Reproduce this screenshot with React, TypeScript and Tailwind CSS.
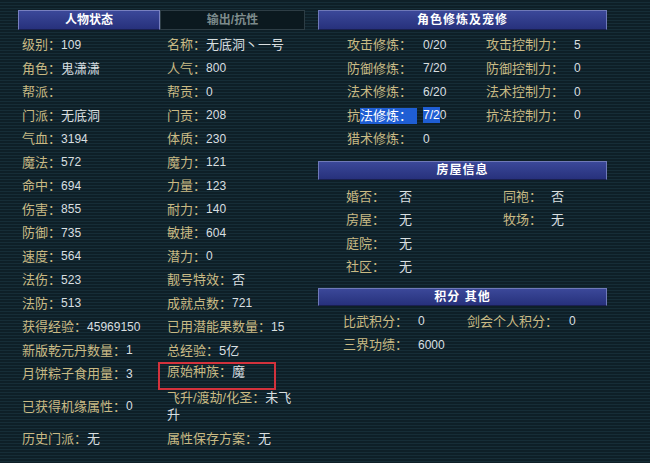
import React from 'react';

const label = 'text-[#c9ba84]';
const value = 'text-[#d9dfe0]';

const isAscii = (s: string) => /^[\x00-\x7f]+$/.test(s);

function Val({ v }: { v: string }) {
  return (
    <span className={`${value} ${isAscii(v) ? 'text-[12px]' : 'text-[13px]'}`}>{v}</span>
  );
}

function Pair({ k, v }: { k: string; v: string }) {
  return (
    <div className="flex items-center whitespace-nowrap">
      <span className={`${label} text-[13px]`}>{k}：</span>
      <Val v={v} />
    </div>
  );
}

const leftRows: [string, string, string, string][] = [
  ['级别', '109', '名称', '无底洞丶一号'],
  ['角色', '鬼潇潇', '人气', '800'],
  ['帮派', '', '帮贡', '0'],
  ['门派', '无底洞', '门贡', '208'],
  ['气血', '3194', '体质', '230'],
  ['魔法', '572', '魔力', '121'],
  ['命中', '694', '力量', '123'],
  ['伤害', '855', '耐力', '140'],
  ['防御', '735', '敏捷', '604'],
  ['速度', '564', '潜力', '0'],
  ['法伤', '523', '靓号特效', '否'],
  ['法防', '513', '成就点数', '721'],
  ['获得经验', '45969150', '已用潜能果数量', '15'],
  ['新版乾元丹数量', '1', '总经验', '5亿'],
];

const trainRows: [string, string, string, string][] = [
  ['攻击修炼', '0/20', '攻击控制力', '5'],
  ['防御修炼', '7/20', '防御控制力', '0'],
  ['法术修炼', '6/20', '法术控制力', '0'],
];

function Header({ title, h }: { title: string; h: string }) {
  return (
    <div
      className={`${h} flex items-center justify-center bg-gradient-to-b from-[#3b4899] to-[#27317c] border border-[#6f79b8] border-b-[#1a2050] text-white font-bold text-[12px] tracking-[1px]`}
    >
      {title}
    </div>
  );
}

export default function App() {
  return (
    <div className="w-[650px] h-[463px] overflow-hidden flex gap-[13px] pt-[10px] pl-[18px] bg-[repeating-linear-gradient(180deg,#0e1f27_0px,#0e1f27_2px,#162d37_2px,#162d37_3px)] font-[family-name:'Liberation_Sans','Noto_Sans_CJK_SC',sans-serif]">
      {/* left: character status */}
      <div className="w-[287px] flex flex-col">
        <div className="h-[20px] flex">
          <div className="w-[142px] flex items-center justify-center bg-gradient-to-b from-[#3b4899] to-[#27317c] border border-[#7880c0] border-b-[#1a2050] text-white font-bold text-[12px]">
            人物状态
          </div>
          <div className="flex-1 flex items-center justify-center bg-[#0b191f] border border-[#2d3d45] text-[#7d8b8c] font-bold text-[12px]">
            输出/抗性
          </div>
        </div>
        <div className="mt-[3px] pl-[4px]">
          {leftRows.map((r) => (
            <div key={r[0]} className="h-[23.5px] grid grid-cols-[145px_1fr]">
              <Pair k={r[0]} v={r[1]} />
              <Pair k={r[2]} v={r[3]} />
            </div>
          ))}
          <div className="h-[23.5px] grid grid-cols-[145px_1fr]">
            <Pair k="月饼粽子食用量" v="3" />
            <div className="relative">
              <Pair k="原始种族" v="魔" />
              <span className="absolute left-[-9px] top-[0px] w-[118px] h-[28px] border-2 border-[#d3323c]" />
            </div>
          </div>
          <div className="h-[41.5px] grid grid-cols-[145px_1fr]">
            <Pair k="已获得机缘属性" v="0" />
            <div className="flex flex-col justify-center text-[13px] leading-[17px]">
              <div className="whitespace-nowrap">
                <span className={label}>飞升/渡劫/化圣：</span>
                <span className={value}>未飞</span>
              </div>
              <div className={value}>升</div>
            </div>
          </div>
          <div className="h-[23.5px] grid grid-cols-[145px_1fr]">
            <Pair k="历史门派" v="无" />
            <Pair k="属性保存方案" v="无" />
          </div>
        </div>
      </div>

      {/* right: training, house, points */}
      <div className="w-[289px] flex flex-col">
        <Header title="角色修炼及宠修" h="h-[20px]" />
        <div className="mt-[3px] pl-[29px]">
          {trainRows.map((r) => (
            <div key={r[0]} className="h-[23.5px] grid grid-cols-[76px_63px_88px_1fr] items-center">
              <span className={`${label} text-[13px]`}>{r[0]}：</span>
              <Val v={r[1]} />
              <span className={`${label} text-[13px]`}>{r[2]}：</span>
              <Val v={r[3]} />
            </div>
          ))}
          <div className="h-[23.5px] grid grid-cols-[76px_63px_88px_1fr] items-center">
            <span className="text-[13px] whitespace-nowrap">
              <span className={label}>抗</span>
              <span className="inline-block leading-[16px] bg-[#1f5ed4] text-white pr-[5px]">法修炼：</span>
            </span>
            <span className={`${value} text-[12px]`}>
              <span className="inline-block leading-[16px] bg-[#1f5ed4] text-white">7/2</span>0
            </span>
            <span className={`${label} text-[13px]`}>抗法控制力：</span>
            <Val v="0" />
          </div>
          <div className="h-[23.5px] grid grid-cols-[76px_63px_88px_1fr] items-center">
            <span className={`${label} text-[13px]`}>猎术修炼：</span>
            <Val v="0" />
          </div>
        </div>

        <div className="mt-[10px]">
          <Header title="房屋信息" h="h-[19px]" />
        </div>
        <div className="mt-[5px] pl-[28px]">
          <div className="h-[23.5px] grid grid-cols-[53px_104px_48px_1fr] items-center">
            <span className={`${label} text-[13px]`}>婚否：</span>
            <Val v="否" />
            <span className={`${label} text-[13px]`}>同袍：</span>
            <Val v="否" />
          </div>
          <div className="h-[23.5px] grid grid-cols-[53px_104px_48px_1fr] items-center">
            <span className={`${label} text-[13px]`}>房屋：</span>
            <Val v="无" />
            <span className={`${label} text-[13px]`}>牧场：</span>
            <Val v="无" />
          </div>
          <div className="h-[23.5px] grid grid-cols-[53px_104px_48px_1fr] items-center">
            <span className={`${label} text-[13px]`}>庭院：</span>
            <Val v="无" />
          </div>
          <div className="h-[23.5px] grid grid-cols-[53px_104px_48px_1fr] items-center">
            <span className={`${label} text-[13px]`}>社区：</span>
            <Val v="无" />
          </div>
        </div>

        <div className="mt-[9px]">
          <Header title="积分 其他" h="h-[18px]" />
        </div>
        <div className="mt-[4px] pl-[25px]">
          <div className="h-[23.5px] grid grid-cols-[75px_49px_102px_1fr] items-center">
            <span className={`${label} text-[13px]`}>比武积分：</span>
            <Val v="0" />
            <span className={`${label} text-[13px] whitespace-nowrap`}>剑会个人积分：</span>
            <Val v="0" />
          </div>
          <div className="h-[23.5px] grid grid-cols-[75px_49px_102px_1fr] items-center">
            <span className={`${label} text-[13px]`}>三界功绩：</span>
            <Val v="6000" />
          </div>
        </div>
      </div>
    </div>
  );
}
